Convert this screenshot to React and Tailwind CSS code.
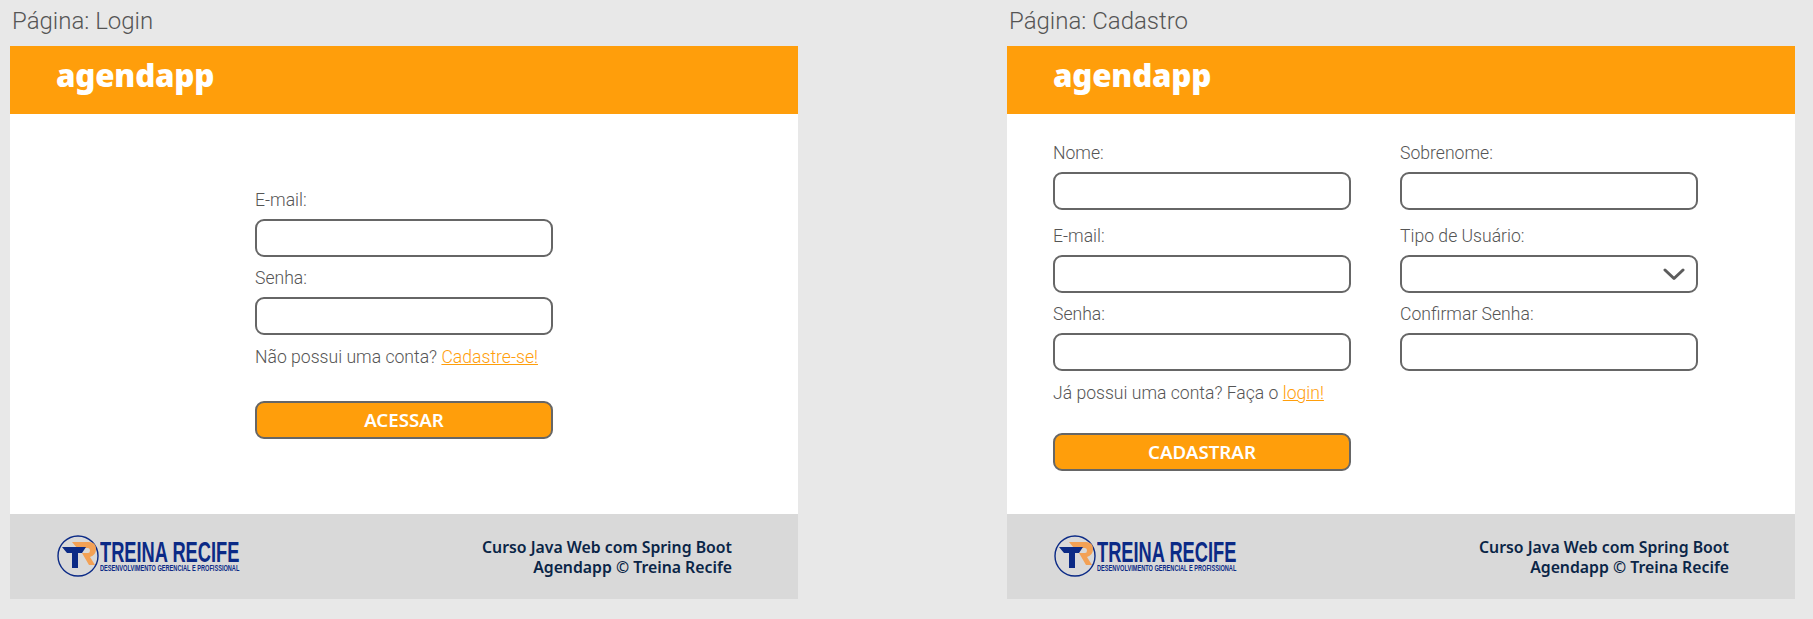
const sans = { fontFamily: 'Roboto, "Noto Sans", sans-serif' };
const narrow = { fontFamily: '"Liberation Sans", Arial, sans-serif' };
const noto = { fontFamily: '"Noto Sans", sans-serif' };

function Field({ label, select }) {
  return (
    <div className="flex flex-col">
      <label className="h-[27px] whitespace-nowrap text-[17.6px] leading-[27px] font-light text-[#555555]">{label}</label>
      <div className="relative mt-[5px] h-[38px] w-[298px] rounded-[9px] border-2 border-[#666666] bg-white">
        {select && (
          <svg className="absolute right-[11px] top-[11px]" width="22" height="13" viewBox="0 0 22 13" fill="none">
            <path d="M2 2 L11 10.5 L20 2" stroke="#5c5c5c" strokeWidth="3" strokeLinecap="round" strokeLinejoin="round" />
          </svg>
        )}
      </div>
    </div>
  );
}

function Submit({ children }) {
  return (
    <button
      className="block h-[38px] w-[298px] rounded-[9px] border-2 border-[#666666] bg-[#ff9e0b] text-[18.7px] font-semibold text-white"
      style={noto}
    >
      {children}
    </button>
  );
}

function Logo() {
  return (
    <div className="flex items-center">
      <svg width="43" height="43" viewBox="0 0 43 43" fill="none">
        <circle cx="21" cy="21" r="20" stroke="#0b2a86" strokeWidth="1.4" />
        <path d="M15 7 H32 Q39 7 39 14 Q39 20 33 22 L38 30 H32 L25 18 H31 Q33 18 33 15.5 Q33 13 31 13 H20 Z" fill="#f3a155" />
        <path d="M5 12 H29 L25 18 H21 V33 H15 V18 H10 Z" fill="#0b2a86" />
      </svg>
      <div className="flex w-[139px] flex-col items-start text-[#0b2a86]" style={narrow}>
        <span className="origin-left scale-x-[0.63] whitespace-nowrap text-[29px] leading-[24px] font-bold">
          TREINA RECIFE
        </span>
        <span className="origin-left scale-x-[0.66] whitespace-nowrap text-[8.5px] leading-[9px] font-bold">
          DESENVOLVIMENTO GERENCIAL E PROFISSIONAL
        </span>
      </div>
    </div>
  );
}

function Panel({ title, children, center }) {
  return (
    <div className="flex w-[788px] flex-col">
      <h2 className="flex h-[46px] items-center pb-[5px] pl-[2px] text-[24px] font-light text-[#555555]">{title}</h2>
      <header className="flex h-[68px] items-center bg-[#ff9e0b] pb-[8px] pl-[46px]">
        <span className="text-[31.3px] leading-none font-black tracking-[-0.2px] text-white" style={noto}>agendapp</span>
      </header>
      <main className={`flex h-[400px] bg-white ${center ? 'items-center justify-center' : 'pl-[46px] pt-[26px]'}`}>
        {children}
      </main>
      <footer className="flex h-[85px] items-center justify-between bg-[#d9d9d9] pl-[47px] pr-[66px]">
        <Logo />
        <div className="text-right text-[15.8px] leading-[20px] font-semibold text-[#0a2547]" style={noto}>
          <p>Curso Java Web com Spring Boot</p>
          <p>Agendapp © Treina Recife</p>
        </div>
      </footer>
    </div>
  );
}

function Hint({ children }) {
  return <p className="mt-[9px] h-[27px] whitespace-nowrap text-[17.6px] leading-[27px] font-light text-[#555555]">{children}</p>;
}

function Tail({ children }) {
  return <a className="text-[#ff9e0b] underline decoration-1">{children}</a>;
}

export default function App() {
  return (
    <div className="flex h-[619px] w-[1813px] gap-[209px] bg-[#e8e8e8] pl-[10px]" style={sans}>
      <Panel title="Página: Login" center>
        <div className="flex w-[298px] flex-col pb-[2px]">
          <div className="flex flex-col gap-[8px]">
            <Field label="E-mail:" />
            <Field label="Senha:" />
          </div>
          <Hint>
            Não possui uma conta? <Tail>Cadastre-se!</Tail>
          </Hint>
          <div className="mt-[30px]">
            <Submit>ACESSAR</Submit>
          </div>
        </div>
      </Panel>
      <Panel title="Página: Cadastro">
        <div className="flex gap-[49px]">
          <div className="flex w-[298px] flex-col">
            <div className="flex flex-col">
              <div className="mb-[13px]">
                <Field label="Nome:" />
              </div>
              <div className="mb-[8px]">
                <Field label="E-mail:" />
              </div>
              <Field label="Senha:" />
            </div>
            <Hint>
              Já possui uma conta? Faça o <Tail>login!</Tail>
            </Hint>
            <div className="mt-[26px]">
              <Submit>CADASTRAR</Submit>
            </div>
          </div>
          <div className="flex w-[298px] flex-col">
            <div className="mb-[13px]">
              <Field label="Sobrenome:" />
            </div>
            <div className="mb-[8px]">
              <Field label="Tipo de Usuário:" select />
            </div>
            <Field label="Confirmar Senha:" />
          </div>
        </div>
      </Panel>
    </div>
  );
}
